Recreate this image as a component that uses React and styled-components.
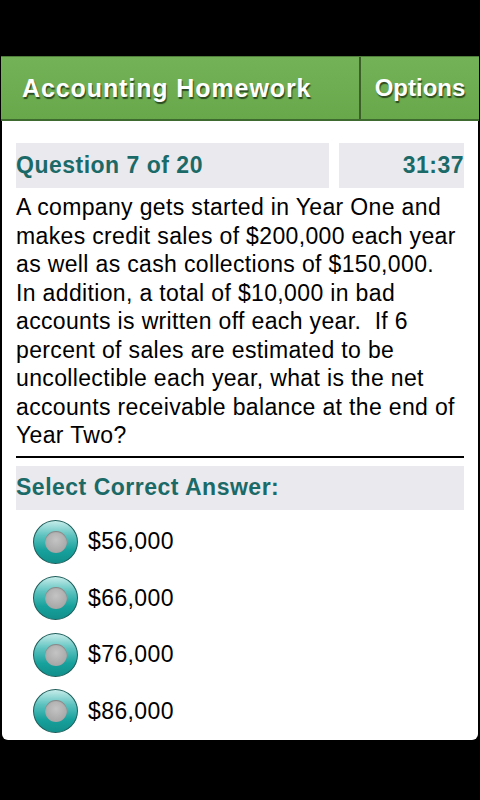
import React from 'react';
import styled, { createGlobalStyle } from 'styled-components';

const Global = createGlobalStyle`
    html, body {
        margin: 0;
        padding: 0;
        background: #000;
    }
    body {
        font-family: "Liberation Sans", Arial, sans-serif;
    }
`;

const Screen = styled.div`
    width: 480px;
    height: 800px;
    background: #000;
    padding-top: 56px;
    box-sizing: border-box;
`;

const Header = styled.div`
    display: flex;
    height: 65px;
    margin: 0 1px;
    background: linear-gradient(#74b257, #68a84b);
    border-top: 1px solid #4e7e3a;
    border-bottom: 2px solid #3f6a2f;
    box-sizing: border-box;
`;

const HeaderCell = styled.div`
    display: flex;
    align-items: center;
    justify-content: ${p => (p.$center ? 'center' : 'flex-start')};
    flex: ${p => (p.$grow ? 1 : 'none')};
    width: ${p => (p.$grow ? 'auto' : '118px')};
    padding-left: ${p => (p.$grow ? '21px' : '0')};
    border-left: ${p => (p.$grow ? 'none' : '2px solid #3a5f2b')};
    color: #fff;
    font-size: ${p => (p.$grow ? '25px' : '24px')};
    font-weight: bold;
    letter-spacing: ${p => (p.$grow ? '0.9px' : '0')};
    text-shadow: 1px 2px 1px #2c4a20;
`;

const Panel = styled.div`
    background: #fff;
    margin: 0 2px;
    height: 619px;
    border-radius: 0 0 6px 6px;
    padding: 22px 14px 0;
    box-sizing: border-box;
`;

const InfoRow = styled.div`
    display: grid;
    grid-template-columns: 313px 1fr;
    gap: 10px;
`;

const InfoBox = styled.div`
    background: #e9e9ee;
    height: 45px;
    display: flex;
    align-items: center;
    justify-content: ${p => (p.$right ? 'flex-end' : 'flex-start')};
    color: #1b6a67;
    font-size: 23px;
    font-weight: bold;
    letter-spacing: 0.5px;
`;

const Body = styled.p`
    margin: 5px 0 0;
    font-size: 23px;
    line-height: 28.5px;
    letter-spacing: 0.35px;
    color: #000;
    white-space: nowrap;
`;

const Rule = styled.div`
    height: 2px;
    background: #000;
    margin-top: 6px;
`;

const SectionLabel = styled.div`
    margin-top: 8px;
    background: #e9e9ee;
    height: 44px;
    display: flex;
    align-items: center;
    color: #1b6a67;
    font-size: 23px;
    font-weight: bold;
    letter-spacing: 0.5px;
`;

const Answers = styled.div`
    display: flex;
    flex-direction: column;
    gap: 12.5px;
    margin-top: 10px;
    padding-left: 17px;
`;

const Answer = styled.label`
    display: flex;
    align-items: center;
    gap: 10px;
    font-size: 23px;
    letter-spacing: 0.4px;
    color: #000;
    height: 44px;
`;

const Radio = styled.span`
    width: 45px;
    height: 44px;
    border-radius: 50%;
    box-sizing: border-box;
    border: 1px solid #1f5e5b;
    background: linear-gradient(#c6ecea 0%, #5cc2bf 35%, #17a19d 70%, #128f8b 100%);
    display: flex;
    align-items: center;
    justify-content: center;
`;

const RadioDot = styled.span`
    width: 22px;
    height: 22px;
    border-radius: 50%;
    background: radial-gradient(circle at 50% 40%, #c4c4c4, #9c9c9c);
    box-shadow: inset 0 1px 1px rgba(0, 0, 0, 0.25);
`;

const questionLines = [
    'A company gets started in Year One and',
    'makes credit sales of $200,000 each year',
    'as well as cash collections of $150,000.',
    'In addition, a total of $10,000 in bad',
    'accounts is written off each year.\u00a0 If 6',
    'percent of sales are estimated to be',
    'uncollectible each year, what is the net',
    'accounts receivable balance at the end of',
    'Year Two?',
];

const answers = ['$56,000', '$66,000', '$76,000', '$86,000'];

export default function App() {
    return (
        <Screen>
            <Global />
            <Header>
                <HeaderCell $grow>Accounting Homework</HeaderCell>
                <HeaderCell $center>Options</HeaderCell>
            </Header>
            <Panel>
                <InfoRow>
                    <InfoBox>Question 7 of 20</InfoBox>
                    <InfoBox $right>31:37</InfoBox>
                </InfoRow>
                <Body>
                    {questionLines.map((line, i) => (
                        <React.Fragment key={i}>
                            {line}
                            {i < questionLines.length - 1 && <br />}
                        </React.Fragment>
                    ))}
                </Body>
                <Rule />
                <SectionLabel>Select Correct Answer:</SectionLabel>
                <Answers>
                    {answers.map(a => (
                        <Answer key={a}>
                            <Radio><RadioDot /></Radio>
                            {a}
                        </Answer>
                    ))}
                </Answers>
            </Panel>
        </Screen>
    );
}
